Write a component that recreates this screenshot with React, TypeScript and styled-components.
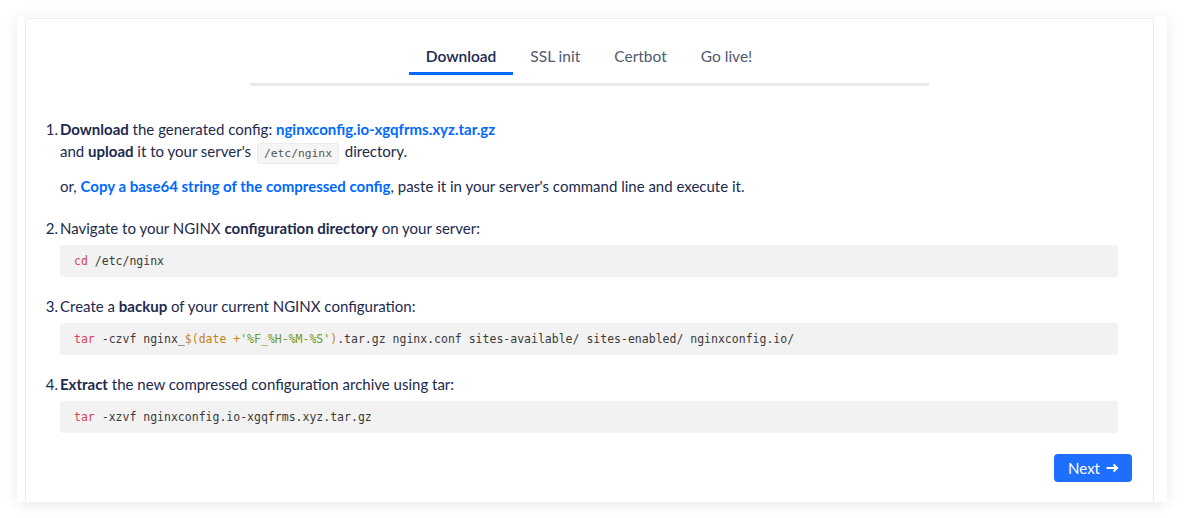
import React, { useState } from 'react';
import styled, { createGlobalStyle } from 'styled-components';

const GlobalStyle = createGlobalStyle`
  html, body {
    margin: 0;
    padding: 0;
    background: #ffffff;
  }
  body {
    font-family: 'Lato', 'Noto Sans', sans-serif;
    color: #1b2a4e;
  }
`;

const Page = styled.div`
  padding: 17px 17px 16px 17px;
  box-sizing: border-box;
  width: 1184px;
  height: 518px;
`;

const Frame = styled.div`
  background: #ffffff;
  box-shadow: 0 2px 14px rgba(0, 0, 0, 0.09);
  padding: 1px 13px 0 8px;
  height: 485px;
  box-sizing: border-box;
  display: flex;
`;

const Card = styled.div`
  flex: 1;
  border: 1px solid #ededed;
  border-bottom: none;
  border-radius: 3px 3px 0 0;
  padding: 0 35px 0 34px;
  display: flex;
  flex-direction: column;
`;

const TabBar = styled.div`
  align-self: center;
  width: 679px;
  margin-top: 25px;
  padding-bottom: 8px;
  border-bottom: 3px solid #e9eaef;
  display: flex;
  justify-content: center;
`;

const Tab = styled.button<{ active?: boolean }>`
  background: none;
  border: none;
  font-family: inherit;
  font-size: 15.5px;
  line-height: 22px;
  font-weight: ${({ active }) => (active ? 600 : 400)};
  color: ${({ active }) => (active ? '#1b2a4e' : '#4f5a70')};
  padding: 1px 17px 5px;
  border-bottom: 3px solid ${({ active }) => (active ? '#0069ff' : 'transparent')};
  cursor: pointer;
`;

const Steps = styled.ol`
  margin: 32px 0 0 0;
  padding: 0;
  list-style: none;
  counter-reset: step;
  font-size: 15px;
  line-height: 22px;
`;

const Step = styled.li<{ after?: number }>`
  counter-increment: step;
  position: relative;
  margin-bottom: ${({ after }) => after ?? 18}px;

  &::before {
    content: counter(step) '.';
    position: absolute;
    left: -30px;
    width: 28px;
    text-align: right;
    top: 0;
  }
`;

const Para = styled.p<{ gap?: number }>`
  margin: ${({ gap }) => gap ?? 0}px 0 0 0;
`;

const Strong = styled.strong`
  font-weight: 700;
`;

const Link = styled.a`
  color: #0069ff;
  font-weight: 700;
  text-decoration: none;
  cursor: pointer;
`;

const InlineCode = styled.code`
  font-family: 'DejaVu Sans Mono', 'Liberation Mono', monospace;
  font-size: 11.3px;
  line-height: 14px;
  color: #555;
  background: #f5f5f5;
  border: 1px solid #ececec;
  border-radius: 3px;
  padding: 3px 6px;
  margin: 0 2px;
`;

const CodeBlock = styled.pre`
  margin: 6px 0 0 0;
  background: #f2f2f2;
  border-radius: 3px;
  padding: 6px 14px;
  font-family: 'DejaVu Sans Mono', 'Liberation Mono', monospace;
  font-size: 11.5px;
  line-height: 20px;
  color: #3a3a3a;
  white-space: pre;
`;

const Tok = styled.span<{ kind: 'cmd' | 'sub' | 'str' }>`
  color: ${({ kind }) =>
    kind === 'cmd' ? '#d4455a' : kind === 'sub' ? '#c0861d' : '#6e9a1a'};
`;

const Footer = styled.div`
  display: flex;
  justify-content: flex-end;
  margin-top: 3px;
  margin-right: -14px;
`;

const NextButton = styled.button`
  display: flex;
  align-items: center;
  gap: 6px;
  background: #1f6fff;
  color: #ffffff;
  border: none;
  border-radius: 4px;
  font-family: inherit;
  font-size: 15px;
  font-weight: 400;
  height: 28px;
  padding: 0 13px 0 14px;
  cursor: pointer;
`;

const tabs = ['Download', 'SSL init', 'Certbot', 'Go live!'];

export default function App() {
  const [active, setActive] = useState(0);

  return (
    <>
      <GlobalStyle />
      <Page>
        <Frame>
          <Card>
            <TabBar>
              {tabs.map((t, i) => (
                <Tab key={t} active={i === active} onClick={() => setActive(i)}>
                  {t}
                </Tab>
              ))}
            </TabBar>

            <Steps>
              <Step after={20}>
                <Para>
                  <Strong>Download</Strong> the generated config:{' '}
                  <Link>nginxconfig.io-xgqfrms.xyz.tar.gz</Link>
                  <br />
                  and <Strong>upload</Strong> it to your server's{' '}
                  <InlineCode>/etc/nginx</InlineCode> directory.
                </Para>
                <Para gap={13}>
                  or, <Link>Copy a base64 string of the compressed config</Link>, paste it in
                  your server's command line and execute it.
                </Para>
              </Step>

              <Step>
                Navigate to your NGINX <Strong>configuration directory</Strong> on your server:
                <CodeBlock>
                  <Tok kind="cmd">cd</Tok> /etc/nginx
                </CodeBlock>
              </Step>

              <Step>
                Create a <Strong>backup</Strong> of your current NGINX configuration:
                <CodeBlock>
                  <Tok kind="cmd">tar</Tok> -czvf nginx_<Tok kind="sub">$(date +</Tok>
                  <Tok kind="str">'%F_%H-%M-%S'</Tok>
                  <Tok kind="sub">)</Tok>.tar.gz nginx.conf sites-available/ sites-enabled/
                  nginxconfig.io/
                </CodeBlock>
              </Step>

              <Step>
                <Strong>Extract</Strong> the new compressed configuration archive using tar:
                <CodeBlock>
                  <Tok kind="cmd">tar</Tok> -xzvf nginxconfig.io-xgqfrms.xyz.tar.gz
                </CodeBlock>
              </Step>
            </Steps>

            <Footer>
              <NextButton>
                Next
                <svg width="13" height="10" viewBox="0 0 13 10" fill="none">
                  <path d="M0.5 5h10.5M7.5 1.5L11 5l-3.5 3.5" stroke="#fff" strokeWidth="2" />
                </svg>
              </NextButton>
            </Footer>
          </Card>
        </Frame>
      </Page>
    </>
  );
}
